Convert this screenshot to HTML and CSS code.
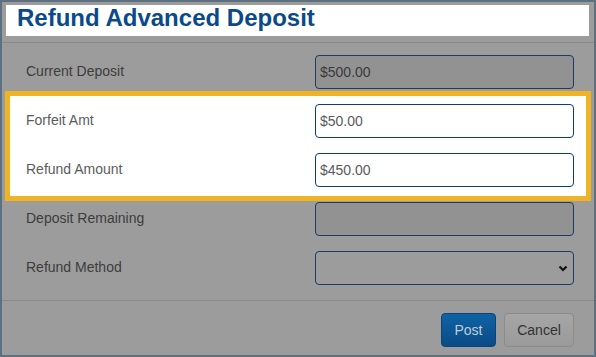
FILE: index.html
```html
<!DOCTYPE html>
<html lang="en">
<head>
  <meta charset="UTF-8">
  <title>Refund Advanced Deposit</title>
  <link rel="stylesheet" href="styles.css">
</head>
<body>

  <div class="dialog">
    <div class="dialog-header">
      <h1>Refund Advanced Deposit</h1>
    </div>

    <div class="dialog-body">
      <div class="field-row">
        <label>Current Deposit</label>
        <input class="field disabled" type="text" value="$500.00" disabled>
      </div>

      <div class="highlight">
        <div class="field-row">
          <label>Forfeit Amt</label>
          <input class="field" type="text" value="$50.00">
        </div>
        <div class="field-row">
          <label>Refund Amount</label>
          <input class="field" type="text" value="$450.00">
        </div>
      </div>

      <div class="field-row">
        <label>Deposit Remaining</label>
        <input class="field disabled" type="text" value="" disabled>
      </div>

      <div class="field-row">
        <label>Refund Method</label>
        <div class="select-wrap">
          <select class="field select">
            <option></option>
          </select>
          <svg class="chevron" width="10" height="7" viewBox="0 0 10 7">
            <path d="M1.5 1.5 L5 5 L8.5 1.5" fill="none" stroke="#111" stroke-width="2.2"/>
          </svg>
        </div>
      </div>
    </div>

    <div class="dialog-footer">
      <button class="btn btn-primary">Post</button>
      <button class="btn btn-default">Cancel</button>
    </div>
  </div>

</body>
</html>
```

FILE: styles.css
```css
* {
  box-sizing: border-box;
}
html, body {
  margin: 0;
  padding: 0;
}
body {
  font-family: "Liberation Sans", Arial, sans-serif;
  background: #5c7080;
}
.dialog {
  width: 596px;
  height: 357px;
  border: 2px solid #5c7080;
  background: #9c9c9c;
  display: flex;
  flex-direction: column;
}
.dialog-header {
  padding: 3px 5px 6px 4px;
  border-bottom: 1px solid #898989;
}
.dialog-header h1 {
  margin: 0;
  background: #fff;
  color: #0b4a8a;
  font-size: 24px;
  line-height: 25px;
  font-weight: bold;
  padding: 0 11px 6px;
}
.dialog-body {
  display: flex;
  flex-direction: column;
  gap: 15px;
  padding: 12px 20px 15px 24px;
  border-bottom: 1px solid #8c8c8c;
}
.field-row {
  display: grid;
  grid-template-columns: 1fr 259px;
  align-items: center;
  height: 34px;
}
.field-row label {
  font-size: 14px;
  color: #3c3c3c;
  padding-bottom: 3px;
}
.highlight {
  display: flex;
  flex-direction: column;
  gap: 15px;
  background: #fff;
  border: 5px solid #efb324;
  margin: -13px -17px -14px -21px;
  padding: 8px 12px 9px 16px;
}
.highlight .field-row label {
  color: #5c5c5c;
}
.field {
  width: 259px;
  height: 34px;
  border: 1px solid #0b3d78;
  border-radius: 4px;
  background: #fff;
  font-family: "Liberation Sans", Arial, sans-serif;
  font-size: 14px;
  color: #5a5a5a;
  padding: 0 4px;
  margin: 0;
}
.field.disabled {
  background: #929292;
  border-color: #1e3c62;
  color: #3a3a3a;
}
.select-wrap {
  position: relative;
  width: 259px;
  height: 34px;
}
.select {
  appearance: none;
  -webkit-appearance: none;
  background: #9c9c9c;
  border-color: #1e3c62;
}
.chevron {
  position: absolute;
  right: 6px;
  top: 14px;
}
.dialog-footer {
  display: flex;
  justify-content: flex-end;
  gap: 8px;
  padding: 12px 20px 0 0;
}
.btn {
  height: 34px;
  font-family: "Liberation Sans", Arial, sans-serif;
  font-size: 14px;
  border-radius: 4px;
  padding: 0;
}
.btn-primary {
  width: 55px;
  background: linear-gradient(#0f63a5, #0a4b86);
  border: 1px solid #0a4479;
  color: #c3ccd6;
}
.btn-default {
  width: 70px;
  background: linear-gradient(#a6a6a6, #9a9a9a);
  border: 1px solid #8b8b8b;
  color: #333;
}
```
